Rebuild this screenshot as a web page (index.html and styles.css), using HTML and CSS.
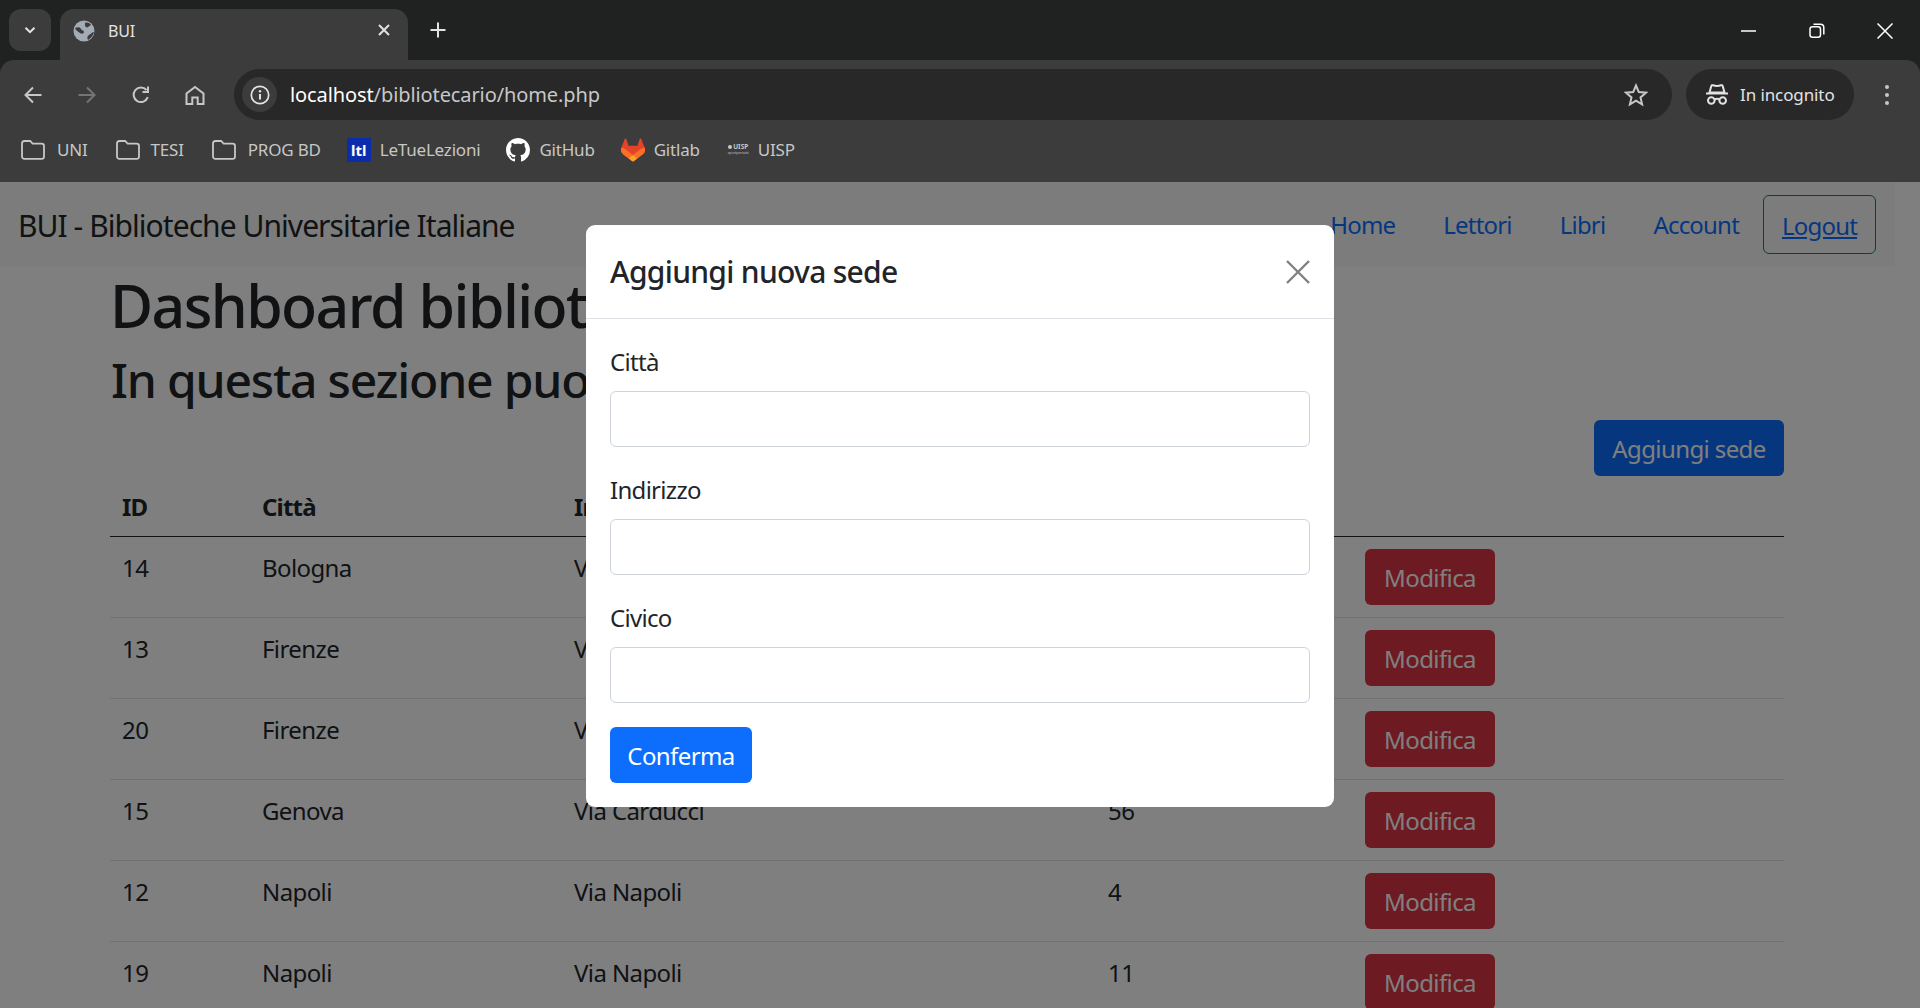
FILE: index.html
```html
<!DOCTYPE html>
<html lang="it">
<head>
    <meta charset="UTF-8">
    <title>BUI</title>
    <link rel="stylesheet" href="styles.css">
</head>
<body>
    <!-- barra del browser -->
    <div class="tabstrip">
        <div class="tab-search">
            <svg width="16" height="16" viewBox="0 0 16 16"><path d="M3.5 5.8 8 10.2l4.500-4.400" fill="none" stroke="#e3e3e3" stroke-width="2"/></svg>
        </div>
        <div class="tab">
            <svg class="favicon" width="22" height="22" viewBox="0 0 22 22">
                <circle cx="11" cy="11" r="10.500" fill="#a3abb5"/>
                <path d="M2 8c3-1 5-1 6 1s3 1 3 3-3 2-4 1-4-2-5-5zM12 3c2-1 5 0 6 2l-3 2c-1 1-3 0-3-2zM21 12c-1 4-3 6-6 8-1-2-1-4 1-5s3-3 5-3z" fill="#3c3c3c"/>
            </svg>
            <span class="tab-title">BUI</span>
            <svg class="tab-close" width="14" height="14" viewBox="0 0 14 14"><path d="M2 2l10 10M12 2 2 12" stroke="#e3e3e3" stroke-width="2"/></svg>
        </div>
        <svg class="new-tab" width="18" height="18" viewBox="0 0 18 18"><path d="M9 1.500v15M1.500 9h15" stroke="#e3e3e3" stroke-width="2"/></svg>
        <div class="win-controls">
            <svg width="16" height="16" viewBox="0 0 16 16"><path d="M0 8h15" stroke="#fff" stroke-width="1.500"/></svg>
            <svg width="16" height="16" viewBox="0 0 16 16"><rect x="1" y="3.800" width="10.500" height="10.500" rx="2.500" fill="none" stroke="#fff" stroke-width="1.500"/><path d="M4.500 1.200h7c2 0 3.300 1.300 3.300 3.300v7" fill="none" stroke="#fff" stroke-width="1.500"/></svg>
            <svg width="16" height="16" viewBox="0 0 16 16"><path d="M.5.500l15 15M15.500.500l-15 15" stroke="#fff" stroke-width="1.500"/></svg>
        </div>
    </div>

    <div class="toolbar">
        <div class="nav-icons">
            <svg width="20" height="20" viewBox="0 0 20 20"><path d="M18.500 10H2.500M10 2.500 2.500 10l7.500 7.500" fill="none" stroke="#c7c7c7" stroke-width="2"/></svg>
            <svg width="20" height="20" viewBox="0 0 20 20"><path d="M1.500 10h16M10 2.500l7.500 7.500-7.500 7.500" fill="none" stroke="#757575" stroke-width="2"/></svg>
            <svg width="20" height="20" viewBox="0 0 20 20"><path d="M16.800 12.200A7.300 7.300 0 1 1 15.500 5M17 1.500v5.500h-5.500" fill="none" stroke="#c7c7c7" stroke-width="2"/></svg>
            <svg width="20" height="20" viewBox="0 0 20 20"><path d="M1.500 19V8.500L10 2l8.500 6.500V19h-5.800v-6.500H7.300V19z" fill="none" stroke="#c7c7c7" stroke-width="2"/></svg>
        </div>
        <div class="omnibox">
            <div class="site-info">
                <svg width="20" height="20" viewBox="0 0 20 20"><circle cx="10" cy="10" r="8.700" fill="none" stroke="#e3e3e3" stroke-width="1.700"/><path d="M10 9v5.500" stroke="#e3e3e3" stroke-width="2"/><circle cx="10" cy="6.300" r="1.200" fill="#e3e3e3"/></svg>
            </div>
            <span class="url"><span class="url-host">localhost</span>/bibliotecario/home.php</span>
            <svg class="star" width="24" height="24" viewBox="0 0 24 24"><path d="M12 2.500l2.800 6.600 7.100.6-5.400 4.700 1.600 7-6.100-3.700-6.100 3.700 1.600-7L2.100 9.700l7.100-.6z" fill="none" stroke="#c7c7c7" stroke-width="2"/></svg>
        </div>
        <div class="incognito">
            <svg width="24" height="22" viewBox="0 0 24 22"><path d="M4.500 8.500 6.300 2c.2-.8 1-1 1.800-.7 1.300.5 2.600.7 3.900.7s2.600-.2 3.900-.7c.8-.3 1.600-.1 1.800.7l1.800 6.500z" fill="none" stroke="#e3e3e3" stroke-width="2"/><path d="M1 9.500h22" stroke="#e3e3e3" stroke-width="2"/><circle cx="6.300" cy="16.500" r="3.300" fill="none" stroke="#e3e3e3" stroke-width="2"/><circle cx="17.700" cy="16.500" r="3.300" fill="none" stroke="#e3e3e3" stroke-width="2"/><path d="M9.500 15.500c1.500-.8 3.500-.8 5 0" fill="none" stroke="#e3e3e3" stroke-width="2"/></svg>
            <span>In incognito</span>
        </div>
        <div class="menu-dots"><i></i><i></i><i></i></div>
    </div>

    <div class="bookmarks">
        <a class="bm bm-uni">
            <svg class="folder" width="24" height="20" viewBox="0 0 24 20"><path d="M1 3.500C1 2.100 2 1 3.400 1h5.800l2.400 2.600h9c1.400 0 2.400 1 2.400 2.400v10.500c0 1.400-1 2.400-2.400 2.400H3.400C2 18.900 1 17.900 1 16.500z" fill="none" stroke="#c7c7c7" stroke-width="1.800"/></svg>
            <span>UNI</span>
        </a>
        <a class="bm bm-tesi">
            <svg class="folder" width="24" height="20" viewBox="0 0 24 20"><path d="M1 3.500C1 2.100 2 1 3.400 1h5.800l2.400 2.600h9c1.400 0 2.400 1 2.400 2.400v10.500c0 1.400-1 2.400-2.400 2.400H3.400C2 18.900 1 17.900 1 16.500z" fill="none" stroke="#c7c7c7" stroke-width="1.800"/></svg>
            <span>TESI</span>
        </a>
        <a class="bm bm-prog">
            <svg class="folder" width="24" height="20" viewBox="0 0 24 20"><path d="M1 3.500C1 2.100 2 1 3.400 1h5.800l2.400 2.600h9c1.400 0 2.400 1 2.400 2.400v10.500c0 1.400-1 2.400-2.400 2.400H3.400C2 18.900 1 17.900 1 16.500z" fill="none" stroke="#c7c7c7" stroke-width="1.800"/></svg>
            <span>PROG BD</span>
        </a>
        <a class="bm bm-ltl">
            <span class="ltl-logo">ltl</span>
            <span>LeTueLezioni</span>
        </a>
        <a class="bm bm-github">
            <svg width="24" height="24" viewBox="0 0 16 16"><path fill="#fff" d="M8 0C3.580 0 0 3.580 0 8c0 3.540 2.290 6.530 5.470 7.590.4.070.55-.17.55-.38 0-.19-.01-.82-.01-1.490-2.010.37-2.530-.49-2.690-.94-.09-.23-.48-.94-.82-1.130-.28-.15-.68-.52-.01-.53.63-.01 1.080.58 1.230.82.72 1.210 1.870.87 2.330.66.070-.52.28-.87.51-1.070-1.780-.2-3.640-.89-3.640-3.950 0-.87.31-1.590.82-2.150-.08-.2-.36-1.020.08-2.120 0 0 .67-.21 2.200.82.64-.18 1.320-.27 2-.27.68 0 1.360.09 2 .27 1.530-1.040 2.200-.82 2.200-.82.44 1.100.16 1.920.08 2.120.51.56.82 1.270.82 2.150 0 3.070-1.870 3.750-3.650 3.950.29.25.54.73.54 1.480 0 1.070-.01 1.930-.01 2.200 0 .21.15.46.55.38A8.013 8.013 0 0 0 16 8c0-4.420-3.580-8-8-8z"/></svg>
            <span>GitHub</span>
        </a>
        <a class="bm bm-gitlab">
            <svg width="24" height="24" viewBox="0 0 24 24">
                <path fill="#e24329" d="m23.600 9.593-.033-.086L20.300.98a.851.851 0 0 0-.336-.405.875.875 0 0 0-1 .054.875.875 0 0 0-.29.44L16.470 7.818H7.537L5.333 1.070a.857.857 0 0 0-.29-.441.875.875 0 0 0-1-.054.859.859 0 0 0-.336.405L.433 9.502l-.032.086a6.066 6.066 0 0 0 2.012 7.010l.01.009.03.021 4.977 3.727 2.462 1.863 1.500 1.132a1.008 1.008 0 0 0 1.220 0l1.499-1.132 2.461-1.863 5-3.750.013-.01a6.068 6.068 0 0 0 2.016-7.003z"/>
                <path fill="#fc6d26" d="M23.600 9.593l-.033-.086a11 11 0 0 0-4.380 1.970L12 16.900l4.600 3.470 5-3.750.013-.01a6.068 6.068 0 0 0 1.987-7.017zM7.400 20.370 12 16.900l-7.180-5.430A11 11 0 0 0 .433 9.500l-.032.086a6.066 6.066 0 0 0 2.012 7.010l.01.009.03.021z"/>
                <path fill="#fca326" d="M7.400 20.370l2.460 1.860 1.500 1.130a1 1 0 0 0 1.220 0l1.500-1.130 2.460-1.860L12 16.900z"/>
            </svg>
            <span>Gitlab</span>
        </a>
        <a class="bm bm-uisp">
            <span class="uisp-logo"><b>UISP</b><small>sportpertutti</small></span>
            <span>UISP</span>
        </a>
    </div>

    <!-- pagina -->
    <div class="viewport">
        <div class="page">
            <nav class="navbar">
                <a class="brand">BUI - Biblioteche Universitarie Italiane</a>
                <ul class="nav-links">
                    <li><a class="nav-link">Home</a></li>
                    <li><a class="nav-link">Lettori</a></li>
                    <li><a class="nav-link">Libri</a></li>
                    <li><a class="nav-link">Account</a></li>
                    <li><a class="nav-link logout">Logout</a></li>
                </ul>
            </nav>

            <main class="content">
                <h1>Dashboard bibliotecario</h1>
                <h2>In questa sezione puoi gestire le sedi</h2>
                <div class="actions">
                    <button class="btn btn-primary">Aggiungi sede</button>
                </div>
                <table class="sedi">
                    <colgroup>
                        <col class="c-id"><col class="c-citta"><col class="c-ind"><col class="c-civ"><col>
                    </colgroup>
                    <thead>
                        <tr><th>ID</th><th>Città</th><th>Indirizzo</th><th>Civico</th><th></th></tr>
                    </thead>
                    <tbody>
                        <tr><td>14</td><td>Bologna</td><td>Via Zamboni</td><td>33</td><td><button class="btn btn-danger">Modifica</button></td></tr>
                        <tr><td>13</td><td>Firenze</td><td>Via Verdi</td><td>8</td><td><button class="btn btn-danger">Modifica</button></td></tr>
                        <tr><td>20</td><td>Firenze</td><td>Via Dante</td><td>21</td><td><button class="btn btn-danger">Modifica</button></td></tr>
                        <tr><td>15</td><td>Genova</td><td>Via Carducci</td><td>56</td><td><button class="btn btn-danger">Modifica</button></td></tr>
                        <tr><td>12</td><td>Napoli</td><td>Via Napoli</td><td>4</td><td><button class="btn btn-danger">Modifica</button></td></tr>
                        <tr><td>19</td><td>Napoli</td><td>Via Napoli</td><td>11</td><td><button class="btn btn-danger">Modifica</button></td></tr>
                    </tbody>
                </table>
            </main>
        </div>

        <div class="backdrop"></div>

        <div class="modal">
            <div class="modal-header">
                <h5>Aggiungi nuova sede</h5>
                <svg class="btn-close" width="24" height="24" viewBox="0 0 24 24"><path d="M1 1l22 22M23 1 1 23" stroke="#808080" stroke-width="2.400"/></svg>
            </div>
            <form class="modal-body">
                <label for="citta">Città</label>
                <input type="text" id="citta">
                <label for="indirizzo">Indirizzo</label>
                <input type="text" id="indirizzo">
                <label for="civico">Civico</label>
                <input type="text" id="civico">
                <button type="button" class="btn btn-confirm">Conferma</button>
            </form>
        </div>
    </div>
</body>
</html>
```

FILE: styles.css
```css
* {
    box-sizing: border-box;
}

html, body {
    margin: 0;
    height: 100%;
    overflow: hidden;
}

body {
    display: flex;
    flex-direction: column;
    background: #202221;
    font-family: "Noto Sans", "Open Sans", sans-serif;
    color: #212529;
}

/* barra delle schede */
.tabstrip {
    display: flex;
    align-items: flex-end;
    height: 60px;
    flex-shrink: 0;
}

.tab-search {
    display: flex;
    align-items: center;
    justify-content: center;
    width: 42px;
    height: 42px;
    margin: 0 9px 9px 9px;
    background: #3c3c3c;
    border-radius: 12px;
}

.tab {
    display: flex;
    align-items: center;
    width: 348px;
    height: 51px;
    padding: 0 17px 9px 13px;
    background: #3c3c3c;
    border-radius: 14px 14px 0 0;
    color: #e3e3e3;
}

.favicon {
    margin-top: 1px;
}

.tab-title {
    flex: 1;
    margin: 2px 0 0 13px;
    font-size: 16px;
    letter-spacing: -0.2px;
}

.new-tab {
    margin: 0 0 21px 21px;
}

.win-controls {
    display: flex;
    gap: 52px;
    margin: 0 27px 21px auto;
}

/* barra degli strumenti */
.toolbar {
    display: flex;
    align-items: center;
    height: 69px;
    flex-shrink: 0;
    padding: 9px 0 9px 0;
    background: #3c3c3c;
    border-radius: 14px 14px 0 0;
}

.nav-icons {
    display: flex;
    gap: 34px;
    margin-left: 23px;
}

.omnibox {
    display: flex;
    align-items: center;
    width: 1438px;
    height: 51px;
    margin-left: 29px;
    padding: 0 24px 0 8px;
    background: #282828;
    border-radius: 26px;
}

.site-info {
    display: flex;
    align-items: center;
    justify-content: center;
    width: 35px;
    height: 35px;
    background: #3c3c3c;
    border-radius: 50%;
}

.url {
    flex: 1;
    margin-left: 13px;
    font-size: 20px;
    letter-spacing: -0.1px;
    color: #c7c7c7;
}

.url-host {
    color: #fff;
}

.incognito {
    display: flex;
    align-items: center;
    gap: 11px;
    width: 168px;
    height: 51px;
    margin-left: 14px;
    padding-left: 19px;
    background: #282828;
    border-radius: 26px;
    font-size: 17px;
    letter-spacing: -0.1px;
    color: #e3e3e3;
}

.menu-dots {
    display: flex;
    flex-direction: column;
    gap: 4px;
    margin-left: 31px;
}

.menu-dots i {
    display: block;
    width: 4px;
    height: 4px;
    background: #c7c7c7;
    border-radius: 50%;
}

/* barra dei preferiti */
.bookmarks {
    display: flex;
    align-items: center;
    height: 53px;
    flex-shrink: 0;
    padding: 0 0 12px 21px;
    background: #3c3c3c;
    font-size: 17px;
    letter-spacing: -0.2px;
    color: #c7c7c7;
}

.bm {
    display: flex;
    align-items: center;
    gap: 9px;
}

.bm-uni { gap: 12px; margin-right: 28px; }
.bm-tesi { gap: 11px; margin-right: 28px; }
.bm-prog { gap: 12px; margin-right: 26px; }
.bm-ltl { margin-right: 26px; }
.bm-github { margin-right: 26px; }
.bm-gitlab { margin-right: 27px; }
.bm-uisp { gap: 8px; }

.ltl-logo {
    display: flex;
    align-items: center;
    justify-content: center;
    width: 24px;
    height: 24px;
    background: #0b2dab;
    color: #fff;
    font-size: 15px;
    font-weight: 700;
    letter-spacing: 0;
}

.uisp-logo {
    display: flex;
    flex-direction: column;
    align-items: center;
    width: 23px;
    line-height: 6px;
    letter-spacing: 0;
    color: #c7c7c7;
}

.uisp-logo b {
    font-size: 6.500px;
}

.uisp-logo b::before {
    content: "";
    display: inline-block;
    width: 4px;
    height: 4px;
    margin-right: 1px;
    background: #c7c7c7;
    border-radius: 50%;
}

.uisp-logo small {
    font-size: 3.500px;
}

/* pagina */
.viewport {
    position: relative;
    flex: 1;
    overflow: hidden;
    background: #fff;
}

.page {
    padding-right: 25px;
    font-size: 24px;
}

.navbar {
    display: flex;
    align-items: center;
    justify-content: space-between;
    height: 84px;
    padding: 0 19px 0 18px;
    background: #f8f9fa;
}

.brand {
    padding-top: 2px;
    font-size: 30px;
    letter-spacing: -0.95px;
}

.nav-links {
    display: flex;
    align-items: center;
    margin: 0;
    padding: 0;
    list-style: none;
}

.nav-link {
    display: block;
    padding: 13px 24px 11px;
    line-height: 36px;
    color: #0d6efd;
    letter-spacing: -0.8px;
}

.logout {
    width: 113px;
    height: 59px;
    padding: 12px 0 10px;
    border: 1px solid #198754;
    border-radius: 6px;
    text-align: center;
    text-decoration: underline;
}

.content {
    padding-left: 110px;
    padding-right: 111px;
}

h1 {
    margin: 0 0 12px;
    padding-top: 3px;
    height: 72px;
    font-size: 59px;
    font-weight: 500;
    line-height: 72px;
    letter-spacing: -1.6px;
}

h2 {
    margin: 0 0 12px 1px;
    padding-top: 1px;
    height: 58px;
    font-size: 48px;
    font-weight: 500;
    line-height: 58px;
    letter-spacing: -1.2px;
}

.actions {
    display: flex;
    justify-content: flex-end;
}

.btn {
    height: 56px;
    padding: 0;
    border: 1px solid transparent;
    border-radius: 6px;
    font-family: inherit;
    font-size: 24px;
    letter-spacing: -0.6px;
}

.btn-primary {
    width: 190px;
    background: #0d6efd;
    color: #fff;
}

.btn-danger {
    width: 130px;
    background: #dc3545;
    color: #fff;
}

/* tabella delle sedi */
.sedi {
    width: 100%;
    table-layout: fixed;
    border-collapse: collapse;
    line-height: 36px;
    letter-spacing: -0.6px;
}

.c-id { width: 140px; }
.c-citta { width: 312px; }
.c-ind { width: 534px; }
.c-civ { width: 257px; }

.sedi th {
    height: 60px;
    padding: 13px 12px 11px;
    border-bottom: 1px solid #212529;
    text-align: left;
    letter-spacing: -0.8px;
}

.sedi td {
    height: 81px;
    padding: 13px 12px 11px;
    border-bottom: 1px solid #dee2e6;
    vertical-align: top;
}

.sedi td:last-child {
    padding: 12px;
}

/* finestra modale */
.backdrop {
    position: absolute;
    inset: 0;
    background: rgba(0, 0, 0, 0.5);
}

.modal {
    position: absolute;
    top: 43px;
    left: 586px;
    width: 748px;
    background: #fff;
    border-radius: 9px;
}

.modal-header {
    display: flex;
    align-items: center;
    justify-content: space-between;
    height: 94px;
    padding: 0 24px;
    border-bottom: 1px solid #dee2e6;
}

.modal-header h5 {
    margin: 0;
    font-size: 30px;
    font-weight: 500;
    letter-spacing: -0.7px;
}

.modal-body {
    display: flex;
    flex-direction: column;
    align-items: flex-start;
    padding: 24px;
    font-size: 24px;
}

.modal-body label {
    height: 36px;
    margin-bottom: 12px;
    line-height: 38px;
    letter-spacing: -0.7px;
}

.modal-body input {
    width: 100%;
    height: 56px;
    margin-bottom: 24px;
    border: 1px solid #ced4da;
    border-radius: 6px;
}

.btn-confirm {
    width: 142px;
    background: #0d6efd;
    color: #fff;
}
```
